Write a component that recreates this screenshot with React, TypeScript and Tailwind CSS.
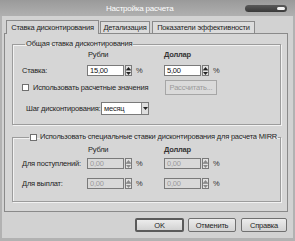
import React from 'react';

const font = { fontFamily: '"Liberation Sans", Arial, sans-serif' };

function Spinner({ disabled }: { disabled?: boolean }) {
    const c = disabled ? '#8a8a8a' : '#222';
    return (
        <div className="ml-[1px] flex h-[11px] w-[7px] flex-col border border-[#7a7a7a] bg-[#e2e2e2]">
            <div className="flex flex-1 items-center justify-center border-b border-[#9a9a9a]">
                <svg width="5" height="3" viewBox="0 0 5 3">
                    <path d="M0 3 L2.5 0 L5 3 Z" fill={c} />
                </svg>
            </div>
            <div className="flex flex-1 items-center justify-center">
                <svg width="5" height="3" viewBox="0 0 5 3">
                    <path d="M0 0 L2.5 3 L5 0 Z" fill={c} />
                </svg>
            </div>
        </div>
    );
}

function NumField({ value, disabled }: { value: string; disabled?: boolean }) {
    return (
        <div className="flex items-center">
            <div
                className={`flex h-[11px] w-[37px] items-center border border-[#7a7a7a] px-[2px] leading-none ${
                    disabled ? 'bg-[#d9d9d9] text-[#9a9a9a]' : 'bg-white text-[#111]'
                }`}
            >
                {value}
            </div>
            <Spinner disabled={disabled} />
            <span className="ml-[4px] text-[#333]">%</span>
        </div>
    );
}

function Checkbox() {
    return <div className="h-[7px] w-[7px] shrink-0 border border-[#6f6f6f] bg-white" />;
}

export default function App() {
    return (
        <div
            className="flex h-[241px] w-[295px] flex-col whitespace-nowrap bg-[#b2b2b2] text-[7.5px] leading-[9px] tracking-[-0.2px] text-[#1e1e1e]"
            style={font}
        >
            {/* Title bar */}
            <div className="flex h-[16px] items-center bg-gradient-to-b from-[#9a9a9a] to-[#b0b0b0]">
                <span className="pl-[106px] text-[8px] text-white">Настройка расчета</span>
                <div className="ml-auto mr-[8px] flex h-[7px] w-[42px] items-center justify-end rounded-full bg-gradient-to-b from-[#5a5a5a] to-[#3a3a3a] pr-[2px]">
                    <div className="h-[3px] w-[8px] rounded-full bg-[#f4f4f4]" />
                </div>
            </div>

            {/* Body */}
            <div className="mx-[2px] mb-[3px] flex flex-1 flex-col bg-[#d2d2d2] pl-[2px] pt-[3px]">
                {/* Tabs */}
                <div className="flex h-[14px] items-end pl-[2px]">
                    <div className="relative z-10 -mb-[1px] flex h-[14px] w-[93px] items-center justify-center border border-b-0 border-[#8a8a8a] bg-[#d6d6d6]">
                        Ставка дисконтирования
                    </div>
                    <div className="ml-[1px] flex h-[12px] w-[50px] items-center justify-center border border-b-0 border-[#8a8a8a] bg-[#dcdcdc]">
                        Детализация
                    </div>
                    <div className="ml-[2px] flex h-[12px] w-[103px] items-center justify-center border border-b-0 border-[#8a8a8a] bg-[#dcdcdc]">
                        Показатели эффективности
                    </div>
                </div>

                {/* Tab panel */}
                <div className="flex h-[179px] w-[284px] flex-col border border-[#8a8a8a] bg-[#d6d6d6] px-[7px] pt-[5px]">
                    {/* Group 1 */}
                    <fieldset className="h-[86px] w-[269px] border border-[#9c9c9c] pl-[9px] shadow-[inset_1px_1px_0_#f2f2f2,1px_1px_0_#f2f2f2]">
                        <legend className="ml-[3px] px-[1px] leading-[10px]">Общая ставка дисконтирования</legend>
                        <div className="mt-[1px] flex h-[9px] items-center">
                            <span className="ml-[66px] w-[76px]">Рубли</span>
                            <span className="font-bold text-[#333]">Доллар</span>
                        </div>
                        <div className="mt-[6px] flex h-[11px] items-center">
                            <span className="w-[65px]">Ставка:</span>
                            <div className="w-[77px]">
                                <NumField value="15,00" />
                            </div>
                            <NumField value="5,00" />
                        </div>
                        <div className="mt-[4px] flex h-[15px] items-center">
                            <Checkbox />
                            <span className="ml-[4px] w-[132px]">Использовать расчетные значения</span>
                            <div className="flex h-[15px] w-[52px] items-center justify-center border border-[#a6a6a6] bg-[#dadada] text-[#9a9a9a]">
                                Рассчитать...
                            </div>
                        </div>
                        <div className="mt-[7px] flex h-[13px] items-center pl-[4px]">
                            <span className="w-[75px]">Шаг дисконтирования:</span>
                            <div className="flex h-[13px] w-[48px] items-center border border-[#7a7a7a] bg-white">
                                <span className="flex-1 pl-[2px]">месяц</span>
                                <div className="flex h-full w-[7px] items-center justify-center border-l border-[#8a8a8a] bg-[#dedede]">
                                    <svg width="5" height="3" viewBox="0 0 5 3">
                                        <path d="M0 0 L2.5 3 L5 0 Z" fill="#222" />
                                    </svg>
                                </div>
                            </div>
                        </div>
                    </fieldset>

                    {/* Group 2 */}
                    <fieldset className="mt-[7px] h-[70px] w-[269px] border border-[#9c9c9c] pl-[9px] shadow-[inset_1px_1px_0_#f2f2f2,1px_1px_0_#f2f2f2]">
                        <legend className="ml-[7px] flex items-center px-[1px] leading-[10px]">
                            <Checkbox />
                            <span className="ml-[3px]">Использовать специальные ставки дисконтирования для расчета MIRR</span>
                        </legend>
                        <div className="mt-[3px] flex h-[9px] items-center">
                            <span className="ml-[66px] w-[76px]">Рубли</span>
                            <span className="font-bold text-[#333]">Доллар</span>
                        </div>
                        <div className="mt-[4px] flex h-[11px] items-center">
                            <span className="w-[65px]">Для поступлений:</span>
                            <div className="w-[77px]">
                                <NumField value="0,00" disabled />
                            </div>
                            <NumField value="0,00" disabled />
                        </div>
                        <div className="mt-[9px] flex h-[11px] items-center">
                            <span className="w-[65px]">Для выплат:</span>
                            <div className="w-[77px]">
                                <NumField value="0,00" disabled />
                            </div>
                            <NumField value="0,00" disabled />
                        </div>
                    </fieldset>
                </div>

                {/* Buttons */}
                <div className="mt-[6px] flex pr-[6px]">
                    <div className="ml-auto flex h-[14px] w-[49px] items-center justify-center rounded-[2px] border-2 border-[#5a5a5a] bg-gradient-to-b from-[#ececec] to-[#d2d2d2]">
                        OK
                    </div>
                    <div className="ml-[4px] flex h-[14px] w-[48px] items-center justify-center rounded-[2px] border border-[#707070] bg-gradient-to-b from-[#ececec] to-[#d2d2d2]">
                        Отменить
                    </div>
                    <div className="ml-[5px] flex h-[14px] w-[46px] items-center justify-center rounded-[2px] border border-[#707070] bg-gradient-to-b from-[#ececec] to-[#d2d2d2]">
                        Справка
                    </div>
                </div>
            </div>
        </div>
    );
}
